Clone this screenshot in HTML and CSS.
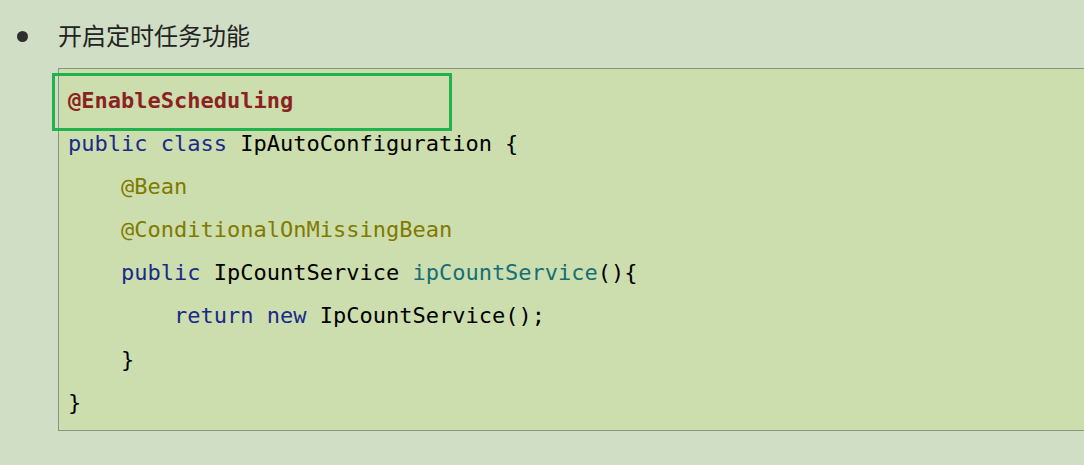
FILE: index.html
```html
<!DOCTYPE html>
<html lang="zh">
<head>
<meta charset="utf-8">
<link rel="stylesheet" href="styles.css">
</head>
<body>
<div class="page">
  <div class="item">
    <span class="bullet"></span>
    <span class="title">开启定时任务功能</span>
  </div>
  <div class="code">
    <div class="highlight"></div>
    <div class="line"><span class="ann-red">@EnableScheduling</span></div>
    <div class="line"><span class="kw">public</span> <span class="kw">class</span> IpAutoConfiguration {</div>
    <div class="line i1"><span class="ann">@Bean</span></div>
    <div class="line i1"><span class="ann">@ConditionalOnMissingBean</span></div>
    <div class="line i1"><span class="kw">public</span> IpCountService <span class="fn">ipCountService</span>(){</div>
    <div class="line i2"><span class="kw">return</span> <span class="kw">new</span> IpCountService();</div>
    <div class="line i1">}</div>
    <div class="line">}</div>
  </div>
</div>
</body>
</html>
```
FILE: styles.css
```css
html, body {
  margin: 0;
  padding: 0;
  background: #cfdec4;
  overflow: hidden;
}
.page {
  width: 1084px;
  height: 465px;
  overflow: hidden;
}
.item {
  display: flex;
  align-items: center;
  height: 24px;
  margin-top: 24px;
  font-family: "Noto Sans CJK SC", sans-serif;
  font-size: 24px;
  color: #222;
}
.bullet {
  width: 11px;
  height: 11px;
  border-radius: 50%;
  background: #2e2e2e;
  margin-left: 17px;
  margin-right: 30px;
}
.title {
  line-height: 24px;
  margin-top: -2px;
}
.code {
  position: relative;
  margin-top: 20px;
  margin-left: 58px;
  width: 1100px;
  box-sizing: border-box;
  background: #cddeae;
  border: 1px solid #8a9482;
  padding: 10px 0 6px 9px;
  font-family: "DejaVu Sans Mono", monospace;
  font-size: 22px;
  color: #000;
}
.line {
  height: 43.1px;
  line-height: 43.1px;
  white-space: pre;
}
.i1 { padding-left: 53px; }
.i2 { padding-left: 106px; }
.kw { color: #1a2a8a; }
.ann { color: #7f7a00; }
.ann-red { color: #8b2222; font-weight: bold; }
.fn { color: #166e78; }
.highlight {
  position: absolute;
  left: -7px;
  top: 4px;
  width: 400px;
  height: 58px;
  box-sizing: border-box;
  border: 3px solid #22b24c;
}
```
